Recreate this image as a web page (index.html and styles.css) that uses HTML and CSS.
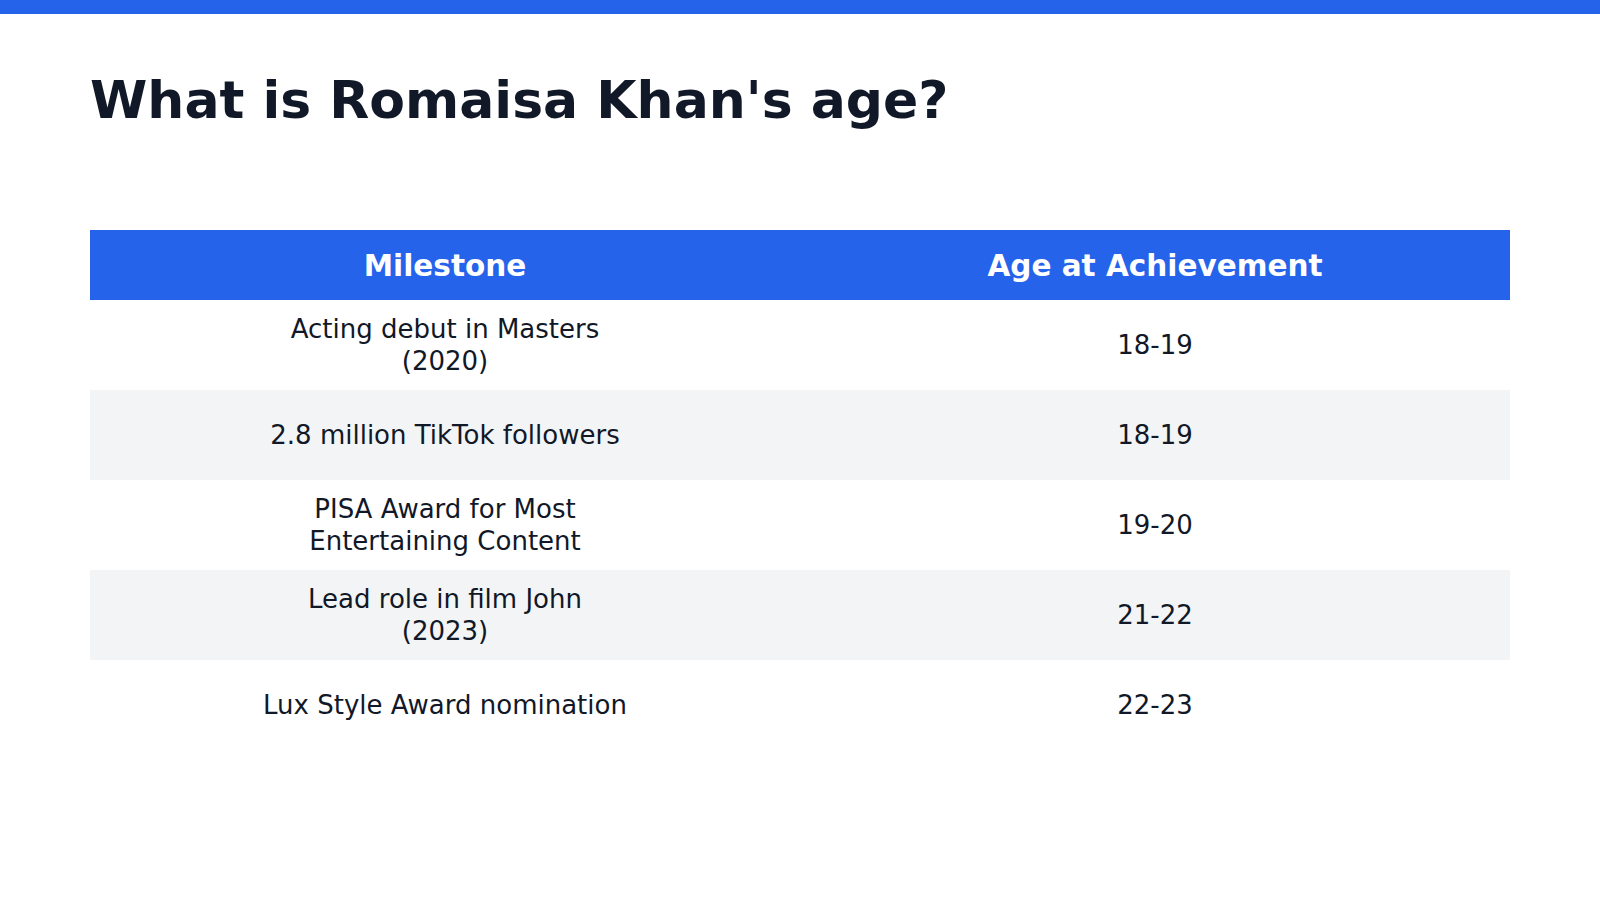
FILE: index.html
```html
<!DOCTYPE html>
<html lang="en">
<head>
<meta charset="utf-8">
<title>What is Romaisa Khan's age?</title>
<link rel="stylesheet" href="styles.css">
</head>
<body>
<div class="topbar"></div>
<main class="content">
  <h1 class="title">What is Romaisa Khan's age?</h1>
  <table class="milestones">
    <thead>
      <tr><th>Milestone</th><th>Age at Achievement</th></tr>
    </thead>
    <tbody>
      <tr><td><span class="cell-text">Acting debut in Masters (2020)</span></td><td><span class="cell-text">18-19</span></td></tr>
      <tr><td><span class="cell-text">2.8 million TikTok followers</span></td><td><span class="cell-text">18-19</span></td></tr>
      <tr><td><span class="cell-text">PISA Award for Most Entertaining Content</span></td><td><span class="cell-text">19-20</span></td></tr>
      <tr><td><span class="cell-text">Lead role in film John (2023)</span></td><td><span class="cell-text">21-22</span></td></tr>
      <tr><td><span class="cell-text">Lux Style Award nomination</span></td><td><span class="cell-text">22-23</span></td></tr>
    </tbody>
  </table>
</main>
</body>
</html>
```

FILE: styles.css
```css
html, body {
  margin: 0;
  padding: 0;
  background: #ffffff;
}
body {
  font-family: "DejaVu Sans", sans-serif;
  color: #111827;
  width: 1600px;
  height: 900px;
  overflow: hidden;
}
.topbar {
  height: 14px;
  background: #2563eb;
}
.content {
  padding: 55px 90px 0 90px;
  display: flex;
  flex-direction: column;
}
.title {
  margin: 0 0 99px 0;
  font-size: 52px;
  line-height: 1.2;
  font-weight: 700;
  color: #111827;
}
.milestones {
  width: 1420px;
  border-collapse: collapse;
  table-layout: fixed;
}
.milestones th {
  background: #2563eb;
  color: #ffffff;
  font-size: 29.5px;
  font-weight: 700;
  height: 68px;
  padding: 2px 0 0 0;
  text-align: center;
  vertical-align: middle;
}
.milestones td {
  height: 90px;
  padding: 0;
  font-size: 26px;
  line-height: 32px;
  text-align: center;
  vertical-align: middle;
  color: #111827;
}
.milestones tbody tr:nth-child(even) td {
  background: #f3f4f6;
}
.cell-text {
  display: inline-block;
  max-width: 364px;
}
```
